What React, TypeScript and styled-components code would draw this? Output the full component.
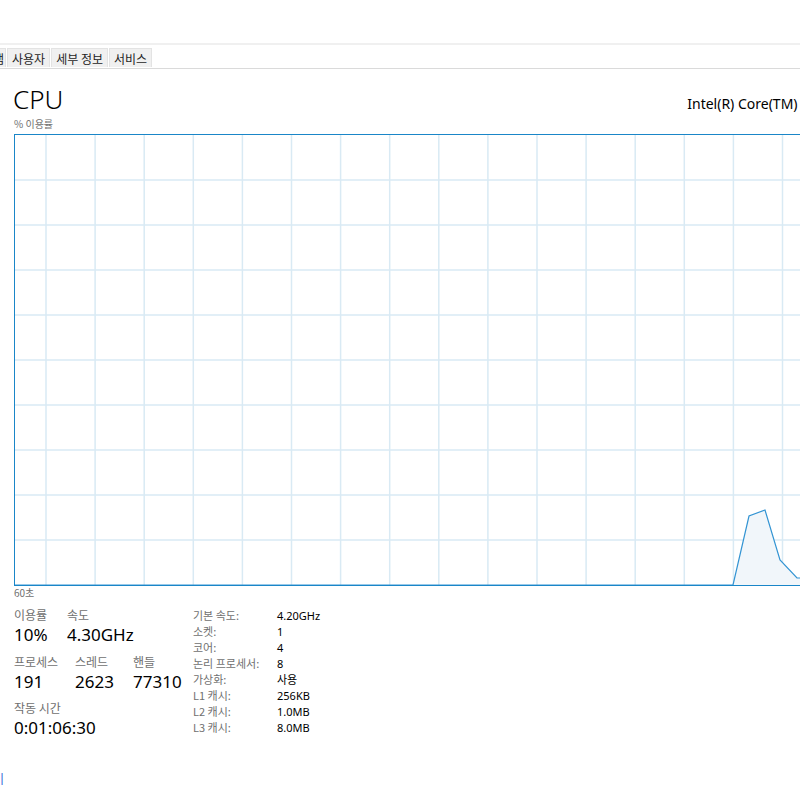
import React from 'react';
import styled, { createGlobalStyle } from 'styled-components';

const GlobalStyle = createGlobalStyle`
  body {
    margin: 0;
    background: #ffffff;
    overflow: hidden;
    font-family: "Segoe UI", "Noto Sans", "Noto Sans CJK KR", sans-serif;
  }
`;

const Window = styled.div`
  width: 800px;
  height: 800px;
  overflow: hidden;
  background: #ffffff;
  display: flex;
  flex-direction: column;
`;

const TitleArea = styled.div`
  height: 43px;
  border-bottom: 2px solid #f0f0f0;
  flex-shrink: 0;
`;

const TabBar = styled.div`
  display: flex;
  margin-top: 3px;
  height: 20px;
  border-bottom: 1px solid #dadada;
  flex-shrink: 0;
`;

// the window is scrolled sideways, so only the tail of the first tab shows
const ClipLeft = styled.div<{ $width: number }>`
  display: flex;
  justify-content: flex-end;
  width: ${p => p.$width}px;
  overflow: hidden;
  flex-shrink: 0;
`;

const Tab = styled.div<{ $pad?: number }>`
  display: flex;
  align-items: center;
  height: 19px;
  padding: 0 ${p => p.$pad ?? 4}px;
  margin-right: 1px;
  background: #f0f0f0;
  border: 1px solid #e3e3e3;
  border-bottom: none;
  box-sizing: border-box;
  font-family: "Noto Sans CJK KR", sans-serif;
  font-size: 12px;
  color: #1e1e1e;
  white-space: nowrap;
  flex-shrink: 0;
`;

const Panel = styled.div`
  width: 950px;
  padding: 13px 0 0 14px;
  display: flex;
  flex-direction: column;
`;

const Header = styled.div`
  display: flex;
  justify-content: space-between;
  align-items: baseline;
  box-sizing: border-box;
  height: 35px;
  padding-top: 4px;
  margin-left: -1px;
`;

const Title = styled.div`
  font-size: 26px;
  font-weight: 300;
  color: #000;
  line-height: 26px;
`;

const Model = styled.div`
  font-size: 14px;
  color: #000;
  white-space: nowrap;
`;

const Caption = styled.div`
  font-family: "Noto Sans CJK KR", sans-serif;
  font-size: 10px;
  color: #707070;
  line-height: 12px;
  height: 12px;
  margin-top: 1px;
`;

const ChartBox = styled.div`
  height: 450px;
  margin-top: 4px;
  border: 1px solid #1a86c8;
  background: #ffffff;
`;

const Footnote = styled(Caption)`
  margin-top: 1px;
`;

const Stats = styled.div`
  display: flex;
  margin-top: 8px;
`;

const LeftStats = styled.div`
  display: flex;
  flex-direction: column;
  width: 179px;
`;

const StatRow = styled.div`
  display: flex;
`;

const Stat = styled.div<{ $width: number }>`
  width: ${p => p.$width}px;
  display: flex;
  flex-direction: column;
`;

const StatLabel = styled.div`
  font-family: "Noto Sans CJK KR", sans-serif;
  font-size: 12px;
  color: #707070;
  line-height: 16px;
`;

const StatValue = styled.div`
  font-size: 17px;
  color: #000;
  line-height: 24px;
  margin-bottom: 6.5px;
  white-space: nowrap;
`;

const InfoTable = styled.div`
  display: grid;
  grid-template-columns: 84px auto;
  grid-auto-rows: 16px;
  align-items: center;
`;

const InfoLabel = styled.div`
  font-family: "Noto Sans CJK KR", sans-serif;
  font-size: 11px;
  color: #707070;
  white-space: nowrap;
`;

const InfoValue = styled.div`
  font-size: 11px;
  color: #000;
`;

const LinkRow = styled.div`
  margin-top: 23px;
  margin-left: -14px;
`;

const MonitorLink = styled.div`
  font-family: "Noto Sans CJK KR", sans-serif;
  font-size: 12px;
  color: #3a6fd8;
  white-space: nowrap;
`;

// grid scrolls with the samples, so the first vertical line sits 31px in
const COLS = Array.from({ length: 20 }, (_, i) => 31 + i * 49.1);
const ROWS = Array.from({ length: 9 }, (_, i) => 45 + i * 45);
const usage: [number, number][] = [
  [718, 450],
  [734, 381],
  [750, 375],
  [765, 425],
  [782, 443],
  [800, 443],
  [940, 443],
];

const UsageChart: React.FC = () => {
  const line = usage.map(([x, y]) => `${x},${y}`).join(' ');
  const area = `0,450 ${line} 940,450`;
  return (
    <svg width="940" height="450" viewBox="0 0 940 450" style={{ display: 'block' }}>
      {COLS.map(x => (
        <line key={`c${x}`} x1={x} y1={0} x2={x} y2={450} stroke="#d9eaf4" strokeWidth={1.5} />
      ))}
      {ROWS.map(y => (
        <line key={`r${y}`} x1={0} y1={y} x2={940} y2={y} stroke="#d9eaf4" strokeWidth={1.5} />
      ))}
      <polygon points={area} fill="#f1f6fa" />
      <polyline points={`0,450 ${line}`} fill="none" stroke="#3394d3" strokeWidth={1.2} />
    </svg>
  );
};

const info: [string, string][] = [
  ['기본 속도:', '4.20GHz'],
  ['소켓:', '1'],
  ['코어:', '4'],
  ['논리 프로세서:', '8'],
  ['가상화:', '사용'],
  ['L1 캐시:', '256KB'],
  ['L2 캐시:', '1.0MB'],
  ['L3 캐시:', '8.0MB'],
];

const App: React.FC = () => {
  return (
    <>
      <GlobalStyle />
      <Window>
        <TitleArea />
        <TabBar>
          <ClipLeft $width={7}>
            <Tab $pad={1}>시작프로그램</Tab>
          </ClipLeft>
          <Tab>사용자</Tab>
          <Tab>세부 정보</Tab>
          <Tab>서비스</Tab>
        </TabBar>
        <Panel>
          <Header>
            <Title>CPU</Title>
            <Model>Intel(R) Core(TM) i7-7700K CPU @ 4.20GHz</Model>
          </Header>
          <Caption>% 이용률</Caption>
          <ChartBox>
            <UsageChart />
          </ChartBox>
          <Footnote>60초</Footnote>
          <Stats>
            <LeftStats>
              <StatRow>
                <Stat $width={53}>
                  <StatLabel>이용률</StatLabel>
                  <StatValue>10%</StatValue>
                </Stat>
                <Stat $width={80}>
                  <StatLabel>속도</StatLabel>
                  <StatValue>4.30GHz</StatValue>
                </Stat>
              </StatRow>
              <StatRow>
                <Stat $width={61}>
                  <StatLabel>프로세스</StatLabel>
                  <StatValue>191</StatValue>
                </Stat>
                <Stat $width={58}>
                  <StatLabel>스레드</StatLabel>
                  <StatValue>2623</StatValue>
                </Stat>
                <Stat $width={60}>
                  <StatLabel>핸들</StatLabel>
                  <StatValue>77310</StatValue>
                </Stat>
              </StatRow>
              <Stat $width={120}>
                <StatLabel>작동 시간</StatLabel>
                <StatValue>0:01:06:30</StatValue>
              </Stat>
            </LeftStats>
            <InfoTable>
              {info.map(([k, v]) => (
                <React.Fragment key={k}>
                  <InfoLabel>{k}</InfoLabel>
                  <InfoValue>{v}</InfoValue>
                </React.Fragment>
              ))}
            </InfoTable>
          </Stats>
          <LinkRow>
            <ClipLeft $width={4}>
              <MonitorLink>리소스 모니터 열기</MonitorLink>
            </ClipLeft>
          </LinkRow>
        </Panel>
      </Window>
    </>
  );
};

export default App;
